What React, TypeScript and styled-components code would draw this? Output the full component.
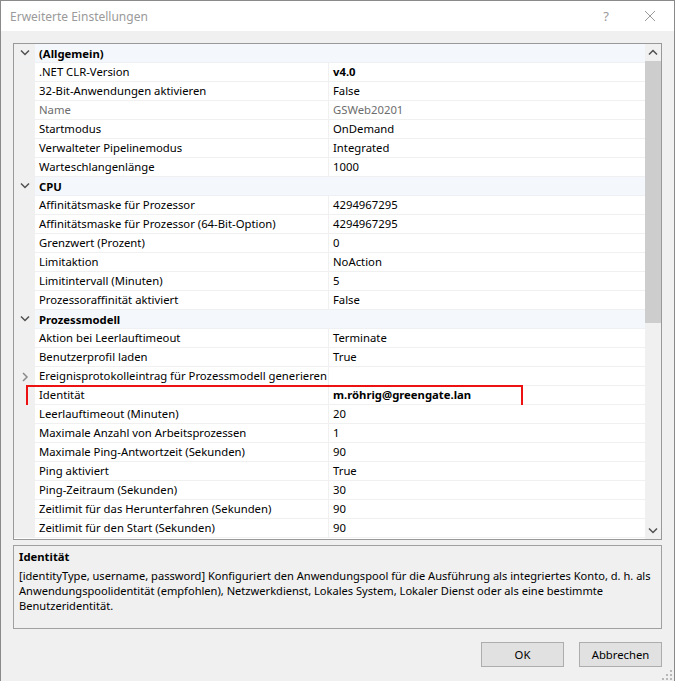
import React from "react";
import styled, { createGlobalStyle } from "styled-components";

type Prop = {
  name: string;
  value?: string;
  bold?: boolean;
  disabled?: boolean;
  expandable?: boolean;
  marked?: boolean;
};

type Category = { title: string; items: Prop[] };

const categories: Category[] = [
  {
    title: "(Allgemein)",
    items: [
      { name: ".NET CLR-Version", value: "v4.0", bold: true },
      { name: "32-Bit-Anwendungen aktivieren", value: "False" },
      { name: "Name", value: "GSWeb20201", disabled: true },
      { name: "Startmodus", value: "OnDemand" },
      { name: "Verwalteter Pipelinemodus", value: "Integrated" },
      { name: "Warteschlangenlänge", value: "1000" },
    ],
  },
  {
    title: "CPU",
    items: [
      { name: "Affinitätsmaske für Prozessor", value: "4294967295" },
      { name: "Affinitätsmaske für Prozessor (64-Bit-Option)", value: "4294967295" },
      { name: "Grenzwert (Prozent)", value: "0" },
      { name: "Limitaktion", value: "NoAction" },
      { name: "Limitintervall (Minuten)", value: "5" },
      { name: "Prozessoraffinität aktiviert", value: "False" },
    ],
  },
  {
    title: "Prozessmodell",
    items: [
      { name: "Aktion bei Leerlauftimeout", value: "Terminate" },
      { name: "Benutzerprofil laden", value: "True" },
      { name: "Ereignisprotokolleintrag für Prozessmodell generieren", expandable: true },
      { name: "Identität", value: "m.röhrig@greengate.lan", bold: true, marked: true },
      { name: "Leerlauftimeout (Minuten)", value: "20" },
      { name: "Maximale Anzahl von Arbeitsprozessen", value: "1" },
      { name: "Maximale Ping-Antwortzeit (Sekunden)", value: "90" },
      { name: "Ping aktiviert", value: "True" },
      { name: "Ping-Zeitraum (Sekunden)", value: "30" },
      { name: "Zeitlimit für das Herunterfahren (Sekunden)", value: "90" },
      { name: "Zeitlimit für den Start (Sekunden)", value: "90" },
    ],
  },
];

const FONT = `"Noto Sans", "Liberation Sans", sans-serif`;

const GlobalStyle = createGlobalStyle`
  html, body {
    margin: 0;
    padding: 0;
    background: #ffffff;
  }
  body {
    font-family: ${FONT};
    font-size: 11.3px;
    color: #000;
  }
`;

const Chevron: React.FC<{ dir: "down" | "right" | "up" }> = ({ dir }) => {
  const d =
    dir === "down" ? "M1 2.5 L5 6.5 L9 2.5" : dir === "up" ? "M1 6.5 L5 2.5 L9 6.5" : "M3 1 L7 5 L3 9";
  return (
    <svg width="10" height="10" viewBox="0 0 10 10">
      <path d={d} fill="none" stroke={dir === "right" ? "#8a8a8a" : "#505050"} strokeWidth="1.5" />
    </svg>
  );
};

const App: React.FC = () => {
  return (
    <>
      <GlobalStyle />
      <Window>
        <TitleBar>
          <Title>Erweiterte Einstellungen</Title>
          <TitleButtons>
            <HelpGlyph>?</HelpGlyph>
            <svg width="12" height="12" viewBox="0 0 12 12">
              <path d="M1 1 L11 11 M11 1 L1 11" stroke="#9a9a9a" strokeWidth="1" />
            </svg>
          </TitleButtons>
        </TitleBar>

        <Body>
          <Grid>
            <Rows>
              {categories.map((cat) => (
                <React.Fragment key={cat.title}>
                  <CategoryRow>
                    <Gutter>
                      <Chevron dir="down" />
                    </Gutter>
                    <CategoryName>{cat.title}</CategoryName>
                  </CategoryRow>
                  {cat.items.map((p) => (
                    <PropRow key={p.name}>
                      <Gutter>{p.expandable && <Chevron dir="right" />}</Gutter>
                      <NameCell $disabled={p.disabled}>{p.name}</NameCell>
                      <ValueCell $bold={p.bold} $disabled={p.disabled}>
                        {p.value}
                      </ValueCell>
                      {p.marked && <Marker />}
                    </PropRow>
                  ))}
                </React.Fragment>
              ))}
            </Rows>
            <ScrollBar>
              <ScrollArrow>
                <Chevron dir="up" />
              </ScrollArrow>
              <Track>
                <Thumb />
              </Track>
              <ScrollArrow>
                <Chevron dir="down" />
              </ScrollArrow>
            </ScrollBar>
          </Grid>

          <Description>
            <DescTitle>Identität</DescTitle>
            <DescText>
              [identityType, username, password] Konfiguriert den Anwendungspool für die Ausführung als
              integriertes Konto, d. h. als Anwendungspoolidentität (empfohlen), Netzwerkdienst, Lokales
              System, Lokaler Dienst oder als eine bestimmte Benutzeridentität.
            </DescText>
          </Description>

          <ButtonRow>
            <DialogButton>OK</DialogButton>
            <DialogButton>Abbrechen</DialogButton>
          </ButtonRow>
        </Body>

        <Grip width="10" height="10" viewBox="0 0 10 10">
          {[
            [8, 0],
            [8, 4],
            [4, 4],
            [8, 8],
            [4, 8],
            [0, 8],
          ].map(([x, y]) => (
            <rect key={`${x}-${y}`} x={x} y={y} width="2" height="2" fill="#b8b8b8" />
          ))}
        </Grip>
      </Window>
    </>
  );
};

export default App;

const Window = styled.div`
  position: relative;
  box-sizing: border-box;
  width: 675px;
  height: 681px;
  border: 1px solid #8a8a8a;
  border-bottom: none;
  background: #f0f0f0;
  display: flex;
  flex-direction: column;
`;

const TitleBar = styled.div`
  height: 30px;
  background: #ffffff;
  display: flex;
  align-items: center;
  justify-content: space-between;
  padding: 0 18px 0 9px;
`;

const Title = styled.div`
  font-size: 12px;
  color: #9a9a9a;
`;

const TitleButtons = styled.div`
  display: flex;
  align-items: center;
  gap: 35px;
`;

const HelpGlyph = styled.span`
  font-size: 13px;
  color: #9a9a9a;
`;

const Body = styled.div`
  padding: 12px 12px 0 12px;
  display: flex;
  flex-direction: column;
`;

const Grid = styled.div`
  box-sizing: border-box;
  height: 497px;
  border: 1px solid #999999;
  background: #ffffff;
  display: flex;
`;

const Rows = styled.div`
  flex: 1;
  overflow: hidden;
`;

const RowBase = styled.div`
  position: relative;
  box-sizing: border-box;
  height: 19px;
  display: grid;
  grid-template-columns: 21px 294px 1fr;
  align-items: center;
  white-space: nowrap;
`;

const CategoryRow = styled(RowBase)`
  grid-template-columns: 21px 1fr;
  background: linear-gradient(to right, #f0f0f0 21px, #f4f7fb 21px);
  border-bottom: 1px solid #eef0f3;
`;

const PropRow = styled(RowBase)`
  background: linear-gradient(to right, #f0f0f0 21px, #ffffff 21px);
`;

const Gutter = styled.div`
  height: 100%;
  display: flex;
  align-items: center;
  justify-content: center;
  padding-left: 1px;
`;

const CategoryName = styled.div`
  padding-left: 4px;
  font-weight: 700;
`;

const NameCell = styled.div<{ $disabled?: boolean }>`
  box-sizing: border-box;
  height: 100%;
  line-height: 18px;
  padding-left: 4px;
  border-right: 1px solid #f0f0f0;
  border-bottom: 1px solid #f0f0f0;
  overflow: hidden;
  color: ${(p) => (p.$disabled ? "#6d6d6d" : "#000")};
`;

const ValueCell = styled.div<{ $bold?: boolean; $disabled?: boolean }>`
  box-sizing: border-box;
  height: 100%;
  line-height: 18px;
  padding-left: 4px;
  border-bottom: 1px solid #f0f0f0;
  font-weight: ${(p) => (p.$bold ? 700 : 400)};
  color: ${(p) => (p.$disabled ? "#6d6d6d" : "#000")};
`;

// red highlight frame drawn over the Identität row
const Marker = styled.div`
  position: absolute;
  left: 12px;
  top: -1px;
  width: 497px;
  height: 23px;
  box-sizing: border-box;
  border: 2px solid #ee1111;
  pointer-events: none;
`;

const ScrollBar = styled.div`
  width: 16px;
  background: #f0f0f0;
  display: flex;
  flex-direction: column;
`;

const ScrollArrow = styled.div`
  height: 17px;
  display: flex;
  align-items: center;
  justify-content: center;
`;

const Track = styled.div`
  flex: 1;
`;

const Thumb = styled.div`
  height: 262px;
  background: #cdcdcd;
`;

const Description = styled.div`
  box-sizing: border-box;
  margin-top: 5px;
  height: 84px;
  border: 1px solid #a0a0a0;
  background: #f0f0f0;
  padding: 3px 4px 0 5px;
`;

const DescTitle = styled.div`
  font-weight: 700;
  line-height: 15px;
  margin-bottom: 4px;
`;

const DescText = styled.div`
  font-size: 11.1px;
  line-height: 15px;
`;

const ButtonRow = styled.div`
  margin-top: 13px;
  display: flex;
  justify-content: flex-end;
  gap: 15px;
`;

const DialogButton = styled.button`
  box-sizing: border-box;
  width: 83px;
  height: 25px;
  border: 1px solid #adadad;
  background: #e1e1e1;
  font-family: ${FONT};
  font-size: 11.3px;
  color: #000;
  padding: 0;
`;

const Grip = styled.svg`
  position: absolute;
  right: 2px;
  bottom: 1px;
`;
